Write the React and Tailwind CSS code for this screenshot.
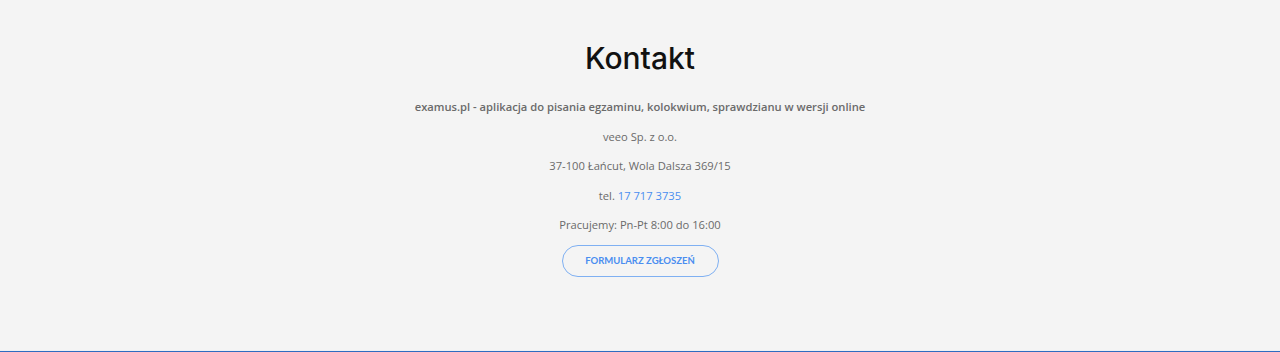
import React from 'react';

const App = () => {
    return (
        <div className="w-full h-[352px] bg-[#f4f4f4] flex flex-col">
            <div className="flex-1 flex flex-col items-center pt-[38px]" style={{ fontFamily: '"Open Sans", sans-serif' }}>
                <h2 className="text-[30px] leading-[40px] font-medium text-[#111111]" style={{ fontFamily: 'Inter, sans-serif' }}>
                    Kontakt
                </h2>
                <div className="mt-[21px] flex flex-col items-center text-[11.2px] leading-[16px] text-[#6a6a6a] gap-[13.5px]">
                    <p className="font-semibold">examus.pl - aplikacja do pisania egzaminu, kolokwium, sprawdzianu w wersji online</p>
                    <p>veeo Sp. z o.o.</p>
                    <p>37-100 Łańcut, Wola Dalsza 369/15</p>
                    <p>
                        tel. <a href="#" className="text-[#4a8ef0]">17 717 3735</a>
                    </p>
                    <p>Pracujemy: Pn-Pt 8:00 do 16:00</p>
                </div>
                <button
                    className="mt-[12px] w-[157px] h-[32px] rounded-full border border-[#7fb0f2] text-[#4a8ef0] text-[9.5px] font-bold"
                    style={{ fontFamily: 'Lato, sans-serif' }}
                >
                    FORMULARZ ZGŁOSZEŃ
                </button>
            </div>
            <div className="h-px bg-[#eef0f4]" />
            <div className="h-px bg-[#2f6cc0]" />
        </div>
    );
};

export default App;
